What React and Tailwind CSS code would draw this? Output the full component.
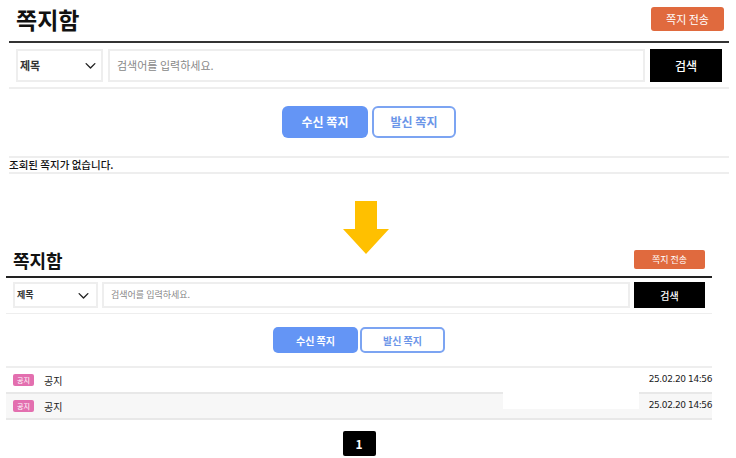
const FONT = { fontFamily: '"Noto Sans CJK KR", "Noto Sans", sans-serif' };

function Chevron({ size }) {
  return (
    <svg width={size} height={size} viewBox="0 0 24 24" fill="none" stroke="#222" strokeWidth="2.2" strokeLinecap="round" strokeLinejoin="round">
      <polyline points="5 9 12 16 19 9" />
    </svg>
  );
}

function TopBoard() {
  return (
    <section className="ml-[9px] w-[720px]">
      <div className="flex items-center justify-between h-[41px] pl-[7px] pr-[5px]">
        <h1 className="text-[23px] font-bold text-[#111] leading-none -mt-[2px]">쪽지함</h1>
        <button className="w-[73px] h-[24px] rounded-[3px] bg-[#E06A3E] text-white text-[11px] -mt-[3px]">쪽지 전송</button>
      </div>
      <div className="h-[2px] bg-[#333]" />
      <div className="flex gap-[5px] px-[7px] mt-[6px] h-[33px]">
        <div className="w-[87px] border-2 border-[#eee] flex items-center justify-between pl-[2px] pr-[3px] text-[11px] font-bold text-[#333]">
          <span>제목</span>
          <Chevron size={15} />
        </div>
        <div className="flex-1 border-2 border-[#eee] flex items-center pl-[7px] text-[11px] text-[#888]">검색어를 입력하세요.</div>
        <button className="w-[72px] bg-black text-white text-[12px] font-medium">검색</button>
      </div>
      <div className="h-[2px] bg-[#eee] mt-[5px]" />
      <div className="flex justify-center gap-[4px] mt-[17px]">
        <button className="w-[86px] h-[32px] rounded-[6px] bg-[#6495F5] text-white text-[12px] font-bold">수신 쪽지</button>
        <button className="w-[84px] h-[32px] rounded-[6px] border-2 border-[#7CA4F2] bg-white text-[#6B95E8] text-[12px] font-bold">발신 쪽지</button>
      </div>
      <div className="h-[2px] bg-[#eee] mt-[18px]" />
      <div className="h-[14px] flex items-center text-[10.5px] text-[#111] font-medium">조회된 쪽지가 없습니다.</div>
      <div className="h-[2px] bg-[#eee]" />
    </section>
  );
}

function Row({ shaded }) {
  return (
    <div className={`h-[26px] flex items-center border-b-2 border-[#e8e8e8] ${shaded ? "bg-[#f7f7f7]" : "bg-white"}`}>
      <span className="ml-[7px] w-[21px] h-[12px] rounded-[2px] bg-[#E36FAF] text-white text-[7px] flex items-center justify-center">공지</span>
      <span className="ml-[10px] text-[10px] text-[#222]">공지</span>
      <span className="ml-auto text-[9px] text-[#222] font-medium" style={{ fontFamily: '"DejaVu Sans", sans-serif', letterSpacing: '-0.4px' }}>25.02.20 14:56</span>
    </div>
  );
}

function BottomBoard() {
  return (
    <section className="ml-[6px] w-[706px] relative">
      <div className="flex items-end justify-between h-[22px] pl-[7px] pr-[7px]">
        <h1 className="text-[18px] font-bold text-[#111] leading-none mb-[7px]">쪽지함</h1>
        <button className="shrink-0 w-[71px] h-[19px] rounded-[2px] bg-[#E06A3E] text-white text-[9px] mb-[7px]">쪽지 전송</button>
      </div>
      <div className="h-[2px] bg-[#222]" />
      <div className="flex gap-[4px] px-[7px] mt-[4px] h-[26px]">
        <div className="w-[85px] border-2 border-[#eee] flex items-center justify-between pl-[2px] pr-[5px] text-[9px] font-bold text-[#333]">
          <span>제목</span>
          <Chevron size={15} />
        </div>
        <div className="flex-1 border-2 border-[#eee] flex items-center pl-[7px] text-[9px] text-[#888]">검색어를 입력하세요.</div>
        <button className="w-[71px] bg-black text-white text-[10px] font-medium">검색</button>
      </div>
      <div className="h-[1px] bg-[#eee] mt-[5px]" />
      <div className="flex justify-center gap-[2px] mt-[13px]">
        <button className="w-[85px] h-[26px] rounded-[5px] bg-[#6495F5] text-white text-[10px] font-bold">수신 쪽지</button>
        <button className="w-[85px] h-[26px] rounded-[5px] border-2 border-[#7CA4F2] bg-white text-[#6B95E8] text-[10px] font-bold">발신 쪽지</button>
      </div>
      <div className="h-[2px] bg-[#eee] mt-[13px]" />
      <Row />
      <Row shaded />
      <div className="flex justify-center mt-[11px]">
        <div className="w-[33px] h-[25px] rounded-[2px] bg-black text-white text-[12px] font-bold flex items-center justify-center">1</div>
      </div>
      {/* redaction boxes */}
      <div className="absolute left-[511px] top-[120px] w-[122px] h-[17px] bg-white" />
      <div className="absolute left-[497px] top-[136px] w-[136px] h-[19px] bg-white" />
    </section>
  );
}

export default function App() {
  return (
    <div className="w-[736px] h-[458px] overflow-hidden bg-white" style={FONT}>
      <TopBoard />
      <div className="ml-[343px] mt-[27px] h-[53px]">
        <svg className="block" width="46" height="53" viewBox="0 0 46 53">
          <polygon points="12,0 34,0 34,28 46,28 23,53 0,28 12,28" fill="#FFC000" />
        </svg>
      </div>
      <BottomBoard />
    </div>
  );
}
